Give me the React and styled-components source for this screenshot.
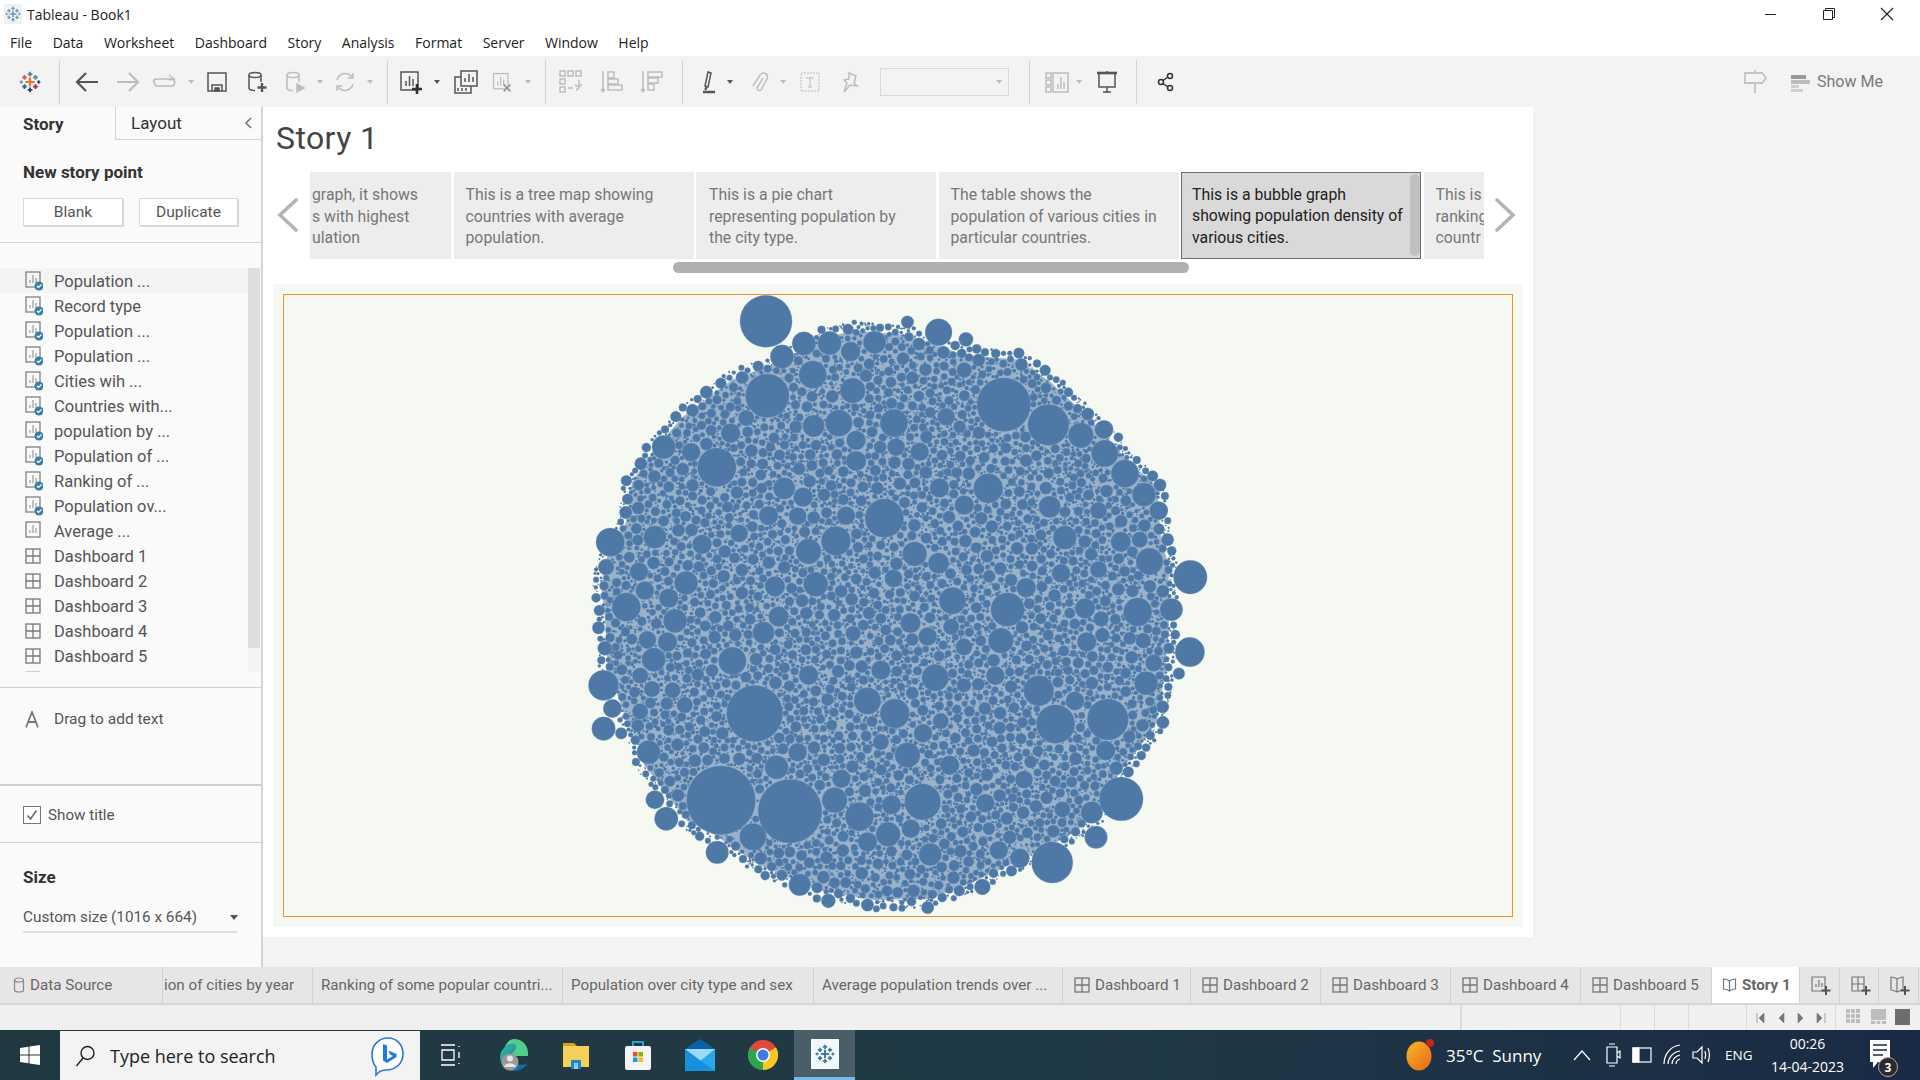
import React, { useMemo } from 'react'
import styled, { createGlobalStyle } from 'styled-components'

const GlobalStyle = createGlobalStyle`
  html, body { margin: 0; padding: 0; background: #fff; }
  body { font-family: "Roboto", "Liberation Sans", sans-serif; color: #444; }
  * { box-sizing: border-box; }
`

const Window = styled.div`
  width: 1920px;
  height: 1080px;
  display: flex;
  flex-direction: column;
  overflow: hidden;
`

const TitleBar = styled.div`
  height: 28px;
  display: flex;
  align-items: center;
  padding: 0 4px 0 4px;
  background: #fff;
  font-family: "Open Sans", sans-serif;
  font-size: 14px;
  color: #222;
`
const TitleText = styled.span`
  margin-left: 5px;
  flex: 1;
`
const WinButton = styled.div`
  width: 58px;
  height: 28px;
  display: flex;
  align-items: center;
  justify-content: center;
`

const MenuBar = styled.div`
  height: 28px;
  display: flex;
  align-items: center;
  gap: 20.5px;
  padding-left: 10px;
  background: #fff;
  font-family: "Open Sans", sans-serif;
  font-size: 14px;
  color: #222;
`

const Toolbar = styled.div`
  height: 51px;
  display: flex;
  align-items: center;
  background: #f3f3f3;
`
const Slot = styled.div`
  width: ${p => p.$w}px;
  height: 100%;
  flex: none;
  display: flex;
  align-items: center;
  justify-content: center;
`
const ToolSep = styled.div`
  width: 1px;
  height: 44px;
  flex: none;
  background: #d2d2d2;
`
const ToolSelect = styled.div`
  width: 129px;
  height: 28px;
  flex: none;
  margin: 0 20px 0 0;
  border: 1.5px solid #d9d9d9;
  display: flex;
  align-items: center;
  justify-content: flex-end;
  padding-right: 6px;
`
const ToolSpacer = styled.div`
  flex: 1;
`
const ShowMe = styled.div`
  display: flex;
  align-items: center;
  gap: 7px;
  width: 150px;
  padding-left: 20px;
  font-size: 16px;
  color: #7a7a7a;
`

const Caret = styled.span`
  width: 0;
  height: 0;
  border-left: 3.5px solid transparent;
  border-right: 3.5px solid transparent;
  border-top: 4px solid ${p => (p.$on ? '#555' : '#bdbdbd')};
`
const BigCaret = styled(Caret)`
  border-left-width: 4px;
  border-right-width: 4px;
  border-top-width: 5px;
`

const Main = styled.div`
  height: 860px;
  display: flex;
  background: #f3f3f3;
`

const Sidebar = styled.aside`
  width: 263px;
  flex: none;
  background: #fafafa;
  border-right: 2px solid #d4d4d4;
  display: flex;
  flex-direction: column;
`
const SideTabs = styled.div`
  height: 33px;
  display: flex;
  flex: none;
`
const SideTab = styled.div`
  width: ${p => (p.$active ? 116 : 145)}px;
  padding-left: ${p => (p.$active ? 23 : 15)}px;
  display: flex;
  align-items: center;
  justify-content: space-between;
  font-size: 17px;
  font-weight: ${p => (p.$active ? 700 : 400)};
  color: #333;
  border-right: ${p => (p.$active ? '1px solid #d4d4d4' : 'none')};
  border-bottom: ${p => (p.$active ? 'none' : '1px solid #d4d4d4')};
`
const SectionHead = styled.div`
  font-size: 17px;
  font-weight: 700;
  color: #333;
  padding-left: 23px;
`
const NewPointHead = styled(SectionHead)`
  height: 58px;
  padding-top: 22px;
`
const StoryButtons = styled.div`
  display: flex;
  gap: 16px;
  padding: 0 0 16px 23px;
  border-bottom: 1px solid #d4d4d4;
`
const StoryButton = styled.div`
  width: ${p => p.$w}px;
  height: 28px;
  background: #fff;
  border: 1px solid #d8d8d8;
  box-shadow: 1px 1px 0 #d8d8d8;
  display: flex;
  align-items: center;
  justify-content: center;
  font-size: 15.5px;
  color: #555;
`
const SheetArea = styled.div`
  margin: 25px 0 15px;
  height: 404px;
  flex: none;
  display: flex;
`
const SheetList = styled.div`
  width: 248px;
  display: flex;
  flex-direction: column;
  overflow: hidden;
`
const SheetRow = styled.div`
  height: 25px;
  flex: none;
  display: flex;
  align-items: center;
  gap: 13px;
  padding: 1px 0 0 25px;
  font-size: 16.5px;
  color: #555;
  background: ${p => (p.$hover ? '#f4f4f4' : 'transparent')};
`
const SheetStub = styled.div`
  width: 15px;
  height: 1px;
  margin: 3px 0 0 25px;
  background: #d0d0d0;
`
const SheetScroll = styled.div`
  width: 12px;
  background: #f3f3f3;
`
const ScrollThumb = styled.div`
  height: 380px;
  background: #dedede;
`
const Section = styled.div`
  flex: none;
  height: ${p => p.$h}px;
  border-top: ${p => p.$line || 1}px solid #d0d0d0;
`
const DragRow = styled.div`
  display: flex;
  align-items: center;
  gap: 15px;
  padding: 22px 0 0 25px;
  font-size: 15.5px;
  color: #555;
`
const CheckRow = styled.div`
  display: flex;
  align-items: center;
  gap: 7px;
  padding: 20px 0 0 23px;
  font-size: 15.2px;
  color: #555;
`
const CheckBox = styled.div`
  width: 18px;
  height: 18px;
  background: #fff;
  border: 1.5px solid #777;
  display: flex;
  align-items: center;
  justify-content: center;
`
const SizeHead = styled(SectionHead)`
  padding-top: 24px;
`
const SizeSelect = styled.div`
  width: 215px;
  height: 30px;
  margin: 16px 0 0 23px;
  display: flex;
  align-items: center;
  justify-content: space-between;
  font-size: 15.3px;
  color: #555;
  border-bottom: 2px solid #e0e0e0;
`

const Content = styled.div`
  flex: 1;
  display: flex;
  align-items: flex-start;
`
const StoryPanel = styled.div`
  width: 1270px;
  height: 830px;
  background: #fff;
  display: flex;
  flex-direction: column;
`
const StoryTitle = styled.h1`
  height: 65px;
  margin: 0;
  padding: 12px 0 0 13px;
  font-family: "Roboto", sans-serif;
  font-size: 32px;
  font-weight: 400;
  letter-spacing: .4px;
  color: #444;
`
const Navigator = styled.div`
  height: 87px;
  display: flex;
  flex: none;
`
const NavArrow = styled.div`
  width: ${p => p.$w}px;
  flex: none;
  display: flex;
  align-items: center;
  justify-content: center;
  padding: 0 0 2px 2px;
`
const Points = styled.div`
  display: flex;
  gap: 2.5px;
`
const Point = styled.div`
  position: relative;
  width: ${p => p.$w}px;
  height: 87px;
  flex: none;
  overflow: hidden;
  padding: ${p => (p.$selected ? 10.5 : 12)}px 0 0 ${p => p.$pad ?? 12}px;
  background: ${p => (p.$selected ? '#d9d9d9' : '#ededed')};
  border: ${p => (p.$selected ? '1.5px solid #6f6f6f' : 'none')};
  color: ${p => (p.$selected ? '#222' : '#777')};
  font-size: 15.8px;
  line-height: 21.5px;
  white-space: nowrap;
`
const PointThumb = styled.div`
  position: absolute;
  top: 1px;
  right: 0;
  width: 10px;
  height: 82px;
  background: #c0c0c0;
  border-radius: 5px;
`
const NavScroll = styled.div`
  width: 516px;
  height: 11px;
  flex: none;
  margin: 3px 0 0 410px;
  background: #b0b0b0;
  border-radius: 6px;
`
const Dash = styled.div`
  width: 1250px;
  height: 643px;
  flex: none;
  margin: 11px 0 0 10px;
  padding: 10px;
  background: #f5f9f1;
`
const DashFrame = styled.div`
  width: 1230px;
  height: 623px;
  border: 1px solid #f0932b;
`

const Tabs = styled.div`
  height: 38px;
  display: flex;
  background: #e6e6e6;
  border-bottom: 2px solid #d6d6d6;
  font-size: 15.2px;
  color: #666;
`
const Tab = styled.div`
  width: ${p => p.$w}px;
  flex: none;
  display: flex;
  align-items: center;
  gap: 5px;
  white-space: nowrap;
  overflow: hidden;
  padding-left: ${p => p.$pad}px;
  background: ${p => (p.$active ? '#fff' : 'transparent')};
  font-weight: ${p => (p.$active ? 700 : 400)};
  border-right: 1px solid #d2d2d2;
`
const StatusBar = styled.div`
  height: 25px;
  display: flex;
  background: #f0f0f0;
`
const StatusCell = styled.div`
  width: ${p => p.$w}px;
  flex: none;
  display: flex;
  align-items: center;
  justify-content: space-evenly;
  border-right: ${p => p.$line ?? 1}px solid #dcdcdc;
`
const Taskbar = styled.div`
  height: 50px;
  display: flex;
  align-items: center;
  background: linear-gradient(90deg, #203840 0%, #203a45 55%, #1a2a45 100%);
  color: #fff;
  font-family: "Open Sans", sans-serif;
`
const SearchBox = styled.div`
  width: 360px;
  height: 49px;
  margin-top: 1px;
  flex: none;
  display: flex;
  align-items: center;
  padding: 0 14px 0 14px;
  gap: 14px;
  background: #f3f3f3;
  color: #222;
  font-size: 18px;
`
const SearchText = styled.span`
  flex: 1;
`
const TaskSlot = styled.div`
  width: ${p => p.$w}px;
  height: 50px;
  flex: none;
  display: flex;
  align-items: center;
  justify-content: center;
  background: ${p => (p.$active ? '#4a5e68' : 'transparent')};
  border-bottom: ${p => (p.$active ? '3px solid #76b9ed' : 'none')};
`
const Weather = styled.span`
  width: 131px;
  flex: none;
  padding-left: 11px;
  font-size: 17px;
  white-space: pre;
`
const Lang = styled.span`
  width: 49px;
  flex: none;
  padding-left: 9px;
  font-size: 13.5px;
`
const Clock = styled.div`
  width: 85px;
  flex: none;
  text-align: center;
  font-size: 14px;
  line-height: 23px;
`
const Notify = styled.div`
  position: relative;
  width: 70px;
  height: 50px;
  flex: none;
  display: flex;
  align-items: center;
  justify-content: center;
  padding-right: 10px;
`
const Badge = styled.span`
  position: absolute;
  left: 28px;
  top: 27px;
  width: 20px;
  height: 20px;
  border-radius: 50%;
  background: #2b2b2b;
  border: 1px solid #aaa;
  display: flex;
  align-items: center;
  justify-content: center;
  font-size: 12px;
  font-weight: 700;
`

const Svg = ({ w = 24, h, children, c = '#555', sw = 1.5, fill = 'none', vb }) => (
  <svg width={w} height={h || w} viewBox={vb || `0 0 ${w} ${h || w}`} fill={fill} stroke={c} strokeWidth={sw}>
    {children}
  </svg>
)

const OFF = '#bdbdbd'

const TableauMark = ({ size = 24, mono }) => {
  const Plus = ({ x, y, r, c, sw = 2 }) => (
    <path d={`M${x - r} ${y}H${x + r}M${x} ${y - r}V${y + r}`} stroke={mono || c} strokeWidth={sw} />
  )
  return (
    <svg width={size} height={size} viewBox="0 0 24 24" fill="none">
      <Plus x={12} y={12} r={5} c="#e8762b" sw={2.4} />
      <Plus x={12} y={3.5} r={2.6} c="#5b879b" />
      <Plus x={12} y={20.5} r={2.6} c="#1f447b" />
      <Plus x={6} y={7} r={2.6} c="#e15759" />
      <Plus x={18} y={7} r={2.6} c="#59879b" />
      <Plus x={6} y={17} r={2.6} c="#1f6f8f" />
      <Plus x={18} y={17} r={2.6} c="#c72037" />
      <Plus x={2.5} y={12} r={1.8} c="#7199a6" sw={1.6} />
      <Plus x={21.5} y={12} r={1.8} c="#1f447b" sw={1.6} />
    </svg>
  )
}

const BarsSquare = ({ c }) => (
  <>
    <rect x="3" y="3" width="17" height="18" stroke={c} strokeWidth="1.5" />
    <path d="M8 17v-5M11.5 17V7M15 17v-7" stroke={c} strokeWidth="1.5" />
  </>
)

const toolItems = [
  { w: 59, i: <TableauMark size={22} /> },
  { sep: 1 },
  { w: 54, i: <Svg w={26}><path d="M24 13H3M12 4l-9 9 9 9" stroke="#555" strokeWidth="2.2" /></Svg> },
  { w: 28, i: <Svg w={26}><path d="M2 13h21M14 4l9 9-9 9" stroke={OFF} strokeWidth="2.2" /></Svg> },
  { w: 46, i: <Svg w={26} c={OFF}><path d="M3 13h-.5a3 3 0 0 0 3 4h14a3 3 0 0 0 3-4 3 3 0 0 0-3-3h-15a3 3 0 0 0-3 3M17 6l5 4-5 1" /></Svg> },
  { w: 6, i: <Caret /> },
  { w: 46, i: <Svg w={22} c="#555"><path d="M2 2h18v18H2zM6 20v-6h10v6" /><path d="M9 17h4v3H9z" fill="#555" /></Svg> },
  { w: 34, i: <Svg w={24} c="#555"><ellipse cx="10" cy="5" rx="6" ry="2.5" /><path d="M4 5v13c0 1.5 3 2.5 6 2.5M16 5v7" /><path d="M17 13v9M12.5 17.5h9" strokeWidth="2.4" /></Svg> },
  { w: 42, i: <Svg w={24} c={OFF}><ellipse cx="10" cy="5" rx="6" ry="2.5" /><path d="M4 5v13c0 1.5 3 2.5 6 2.5M16 5v7" /><path d="M14 14l7 4-7 4z" fill={OFF} /></Svg> },
  { w: 8, i: <Caret /> },
  { w: 42, i: <Svg w={24} c={OFF}><path d="M4 10a8.5 8.5 0 0 1 15-3M20 14a8.5 8.5 0 0 1-15 3" /><path d="M20 3v5h-5M4 21v-5h5" /></Svg> },
  { w: 8, i: <Caret /> },
  { w: 13 },
  { sep: 1 },
  { w: 46, i: <Svg w={26}><BarsSquare c="#555" /><path d="M19 15v10M14 20h10" stroke="#333" strokeWidth="2.6" /></Svg> },
  { w: 6, i: <Caret $on /> },
  { w: 51, i: <Svg w={26} c="#555"><rect x="8" y="2" width="16" height="15" /><path d="M12 13v-4M16 13V5M20 13V8" /><path d="M8 8H2v16h16v-7M5 22v-3M9 22v-3M13 22v-3" /></Svg> },
  { w: 22, i: <Svg w={26}><BarsSquare c={OFF} /><path d="M15 16l8 8M23 16l-8 8" stroke="#9a9a9a" strokeWidth="2.2" /></Svg> },
  { w: 30, i: <Caret /> },
  { w: 2 },
  { sep: 1 },
  { w: 50, i: <Svg w={26} c={OFF}><path d="M2 2h5v5H2zM10 2h5v5h-5zM18 2h5v5h-5zM2 10h5v5H2zM2 18h5v5H2zM10 19h5M21 11v6a4 4 0 0 1-3 4M17 16l4 2 3-3" /></Svg> },
  { w: 32, i: <Svg w={24} c={OFF}><path d="M3 1v21M1 19l2 3 2-3M8 2h6v6H8zM8 9h10v5H8zM8 15h14v5H8z" /></Svg> },
  { w: 48, i: <Svg w={24} c={OFF}><path d="M3 1v21M1 19l2 3 2-3M8 2h14v5H8zM8 8h10v5H8zM8 14h6v6H8z" /></Svg> },
  { w: 6 },
  { sep: 1 },
  { w: 10 },
  { w: 34, i: <Svg w={24} c="#555"><path d="M10 2l3 1-3 14-3-1zM8 17l-1 3 2-2" /><path d="M5 22h12" strokeWidth="2.5" /></Svg> },
  { w: 6, i: <Caret $on /> },
  { w: 5 },
  { w: 42, i: <Svg w={20} c={OFF}><path d="M14 6l-6 10a2.5 2.5 0 0 0 4 2l6-11a4 4 0 0 0-7-4L4 14" /></Svg> },
  { w: 6, i: <Caret /> },
  { w: 48, i: <Svg w={22} c={OFF} sw={1}><rect x="2" y="2" width="18" height="18" strokeDasharray="2 1" /><path d="M7 7h8M11 7v9M9 16h4" /></Svg> },
  { w: 32, i: <Svg w={22} c={OFF}><path d="M10 2l7 3-2 7 3 3-7-1-6 7 3-9-3-3 5-1z" /></Svg> },
  { w: 14 },
  { select: 1 },
  { sep: 1 },
  { w: 8 },
  { w: 38, i: <Svg w={26} c={OFF}><path d="M2 4h5v5H2zM2 11h5v5H2zM2 18h5v5H2zM9 4h15v19H9zM14 20v-5M17 20V8M20 20v-7" /></Svg> },
  { w: 6, i: <Caret /> },
  { w: 50, i: <Svg w={24} c="#555"><path d="M2 3h20" strokeWidth="2.6" /><path d="M4 3v14h16V3M12 1v2M12 17v6M8 22h8" /></Svg> },
  { w: 4 },
  { sep: 1 },
  { w: 58, i: <Svg w={20} c="#333"><circle cx="14" cy="4" r="2.5" /><circle cx="5" cy="10" r="2.5" /><circle cx="14" cy="16" r="2.5" /><path d="M12 5l-5 3.5M7 11.5l5 3.5" /></Svg> }
]

const Toolbars = () => (
  <Toolbar>
    {toolItems.map((t, n) => {
      if (t.sep) return <ToolSep key={n} />
      if (t.select) return <ToolSelect key={n}><Caret /></ToolSelect>
      return <Slot key={n} $w={t.w}>{t.i}</Slot>
    })}
    <ToolSpacer />
    <Slot $w={30}>
      <Svg w={26} c="#c4c4c4"><path d="M13 1v3M3 4h17l4 5-4 5H3zM13 14v10" strokeWidth="1.8" /></Svg>
    </Slot>
    <ShowMe>
      <Svg w={20} c="none" sw={0}>
        <path d="M1 3h15v4H1z" fill="#9a9a9a" />
        <path d="M1 8h19v4H1z" fill="#bcbcbc" />
        <path d="M1 13h8v3H1zM1 17h12v3H1z" fill="#cfcfcf" />
      </Svg>
      Show Me
    </ShowMe>
  </Toolbar>
)

const SheetGlyph = styled.svg`
  flex: none;
  margin-right: -2px;
`
const SheetIcon = ({ done }) => (
  <SheetGlyph width="18" height="20" viewBox="0 0 18 20" fill="none">
    <rect x="1" y="1" width="14" height="15" stroke="#777" strokeWidth="1.2" />
    <path d="M5 12V9M8 12V4M11 12V7" stroke="#888" />
    {done && <circle cx="14" cy="15" r="4.5" fill="#3b7ea1" />}
    {done && <path d="M12 15l1.5 1.5 3-3" stroke="#fff" strokeWidth="1.2" />}
  </SheetGlyph>
)
const DashGlyph = styled.svg`
  flex: none;
`
const DashIcon = ({ c = '#777' }) => (
  <DashGlyph width="16" height="16" viewBox="0 0 16 16" fill="none" stroke={c} strokeWidth="1.3">
    <rect x="1" y="1" width="14" height="14" />
    <path d="M8 1v14M1 8h14" />
  </DashGlyph>
)

const sheets = [
  ['Population ...', 1], ['Record type', 1], ['Population ...', 1], ['Population ...', 1], ['Cities wih ...', 1],
  ['Countries with...', 1], ['population by ...', 1], ['Population of ...', 1], ['Ranking of ...', 1],
  ['Population ov...', 1], ['Average ...', 0],
  ['Dashboard 1'], ['Dashboard 2'], ['Dashboard 3'], ['Dashboard 4'], ['Dashboard 5']
]

const SidePanel = () => (
  <Sidebar>
    <SideTabs>
      <SideTab $active>Story</SideTab>
      <SideTab>
        Layout
        <svg width="30" height="20" viewBox="0 0 30 20" fill="none" stroke="#777" strokeWidth="1.6">
          <path d="M20 5l-5 5 5 5" />
        </svg>
      </SideTab>
    </SideTabs>
    <NewPointHead>New story point</NewPointHead>
    <StoryButtons>
      <StoryButton $w={100}>Blank</StoryButton>
      <StoryButton $w={99}>Duplicate</StoryButton>
    </StoryButtons>
    <SheetArea>
      <SheetList>
        {sheets.map(([name, done], i) => (
          <SheetRow key={i} $hover={i === 0}>
            {done === undefined ? <DashIcon /> : <SheetIcon done={done} />}
            {name}
          </SheetRow>
        ))}
        <SheetStub />
      </SheetList>
      <SheetScroll><ScrollThumb /></SheetScroll>
    </SheetArea>
    <Section $h={97}>
      <DragRow>
        <svg width="14" height="17" viewBox="0 0 14 17" fill="none" stroke="#777" strokeWidth="1.8"><path d="M1 16.5L7 1l6 15.5M3 11h8" /></svg>
        Drag to add text
      </DragRow>
    </Section>
    <Section $h={58} $line={2}>
      <CheckRow>
        <CheckBox>
          <svg width="12" height="12" viewBox="0 0 12 12" fill="none" stroke="#666" strokeWidth="1.5"><path d="M1.5 6.5L4.5 10l6-8.5" /></svg>
        </CheckBox>
        Show title
      </CheckRow>
    </Section>
    <Section $h={120}>
      <SizeHead>Size</SizeHead>
      <SizeSelect>
        Custom size (1016 x 664)
        <BigCaret $on />
      </SizeSelect>
    </Section>
  </Sidebar>
)

const BIG = `442,98,62 532,151,28 593,150,28 700,148,27 852,124,32 643,170,23 480,182,28 553,225,33 445,275,52 648,263,30
1007,296,64 1113,344,49 917,141,17 778,100,15 1190,369,30 1245,355,22 1247,412,32 1295,460,33 1340,510,28 1375,548,22
1378,487,15 746,340,33 615,340,32 555,347,26 395,328,19 358,364,23 325,445,46 199,397,28 264,409,22 656,381,23
656,430,24 751,397,21 807,408,22 870,325,21 913,214,18 970,495,35 1116,539,26 1232,548,20 854,494,23 913,535,23
723,566,46 632,560,22 485,495,26 530,516,23 448,560,23 517,561,21 608,620,35 543,645,30 795,651,29 852,673,25
378,602,21 290,628,23 178,611,27 72,623,34 62,682,19 252,720,28 140,693,22 154,738,22 110,777,34 211,756,23
226,810,28 463,728,24 560,723,29 745,709,21 885,762,32 1016,783,40 1060,731,23 1000,857,30 1152,612,28 1285,622,24
1330,617,19 1353,669,32 1232,688,20 1143,697,22 1450,706,40 1200,780,24 1325,789,34 1405,783,27 1449,884,35 1238,805,18
1204,860,23 1241,844,17 1338,857,18 1363,910,20 1345,958,28 1090,976,36 1130,1055,46 1254,1044,49 1176,1000,22 1423,935,14
1385,1051,15 472,800,24 436,838,26 362,905,33 175,902,28 208,860,23 160,855,21 59,875,17 143,940,19 171,972,19
220,975,19 56,963,36 77,1018,22 56,1066,28 98,1077,14 143,1025,19 249,1010,19 163,1122,28 415,1030,67 683,1000,32
748,1030,35 844,945,32 715,927,23 543,939,23 649,840,18 785,815,24 826,847,22 882,824,19 912,872,20 987,940,22
912,963,17 335,1236,82 499,1262,76 605,1236,30 664,1275,34 814,1240,43 740,1247,23 732,1317,29 786,1304,22 683,1335,23
832,1365,27 411,1323,32 326,1360,27 178,1235,22 205,1280,28 467,1158,28 517,1122,22 778,1129,30 715,1098,19 878,1153,23
621,1185,22 857,1048,19 815,1077,22 963,1243,22 1055,1187,21 1216,1265,26 1286,1233,52 1226,1324,27 1122,1384,49 1045,1374,23
995,1355,22 956,1442,19 826,1491,15 683,1485,15 590,1475,17 522,1437,26 1249,1118,23 1274,1160,16 1345,1111,10 1146,1258,19
1021,1324,16 904,1357,15`.trim().split(/\s+/).map(s => s.split(',').map(Number))

const OUTLINE = [[560,120],[650,100],[780,110],[920,160],[1050,170],[1130,225],[1210,300],[1260,350],[1320,420],[1390,480],[1400,600],[1420,680],[1420,760],[1420,830],[1410,940],[1390,1060],[1340,1130],[1300,1180],[1240,1290],[1170,1340],[1050,1400],[940,1450],[840,1490],[700,1495],[560,1470],[420,1410],[300,1330],[240,1300],[140,1170],[120,1110],[90,1050],[45,920],[40,820],[30,720],[45,650],[90,570],[105,470],[160,390],[230,310],[350,220],[430,190],[480,170]]

const inside = (x, y) => {
  let hit = false
  for (let i = 0, j = OUTLINE.length - 1; i < OUTLINE.length; j = i++) {
    const [xi, yi] = OUTLINE[i]
    const [xj, yj] = OUTLINE[j]
    if (yi > y !== yj > y && x < ((xj - xi) * (y - yi)) / (yj - yi) + xi) hit = !hit
  }
  return hit
}

// seeded so every render packs the same little bubbles
const packBubbles = () => {
  let seed = 20230414
  const rnd = () => {
    seed = (seed + 0x6d2b79f5) | 0
    let t = Math.imul(seed ^ (seed >>> 15), 1 | seed)
    t = (t + Math.imul(t ^ (t >>> 7), 61 | t)) ^ t
    return ((t ^ (t >>> 14)) >>> 0) / 4294967296
  }
  const out = BIG.slice()
  const cell = 32
  const overlap = 0.9
  const grid = new Map()
  const passes = [[15, 400], [13, 900], [11, 2200], [9.5, 4000], [8, 6000], [7, 7000], [6, 8000], [5, 9000], [4, 10000], [3.2, 10000], [2.5, 10000], [1.9, 10000]]
  passes.forEach(([r, tries]) => {
    for (let n = 0; n < tries; n++) {
      const x = 20 + rnd() * 1420
      const y = 90 + rnd() * 1420
      if (!inside(x, y)) continue
      let free = true
      for (const b of BIG) {
        const d = r + b[2] - overlap
        if ((x - b[0]) ** 2 + (y - b[1]) ** 2 < d * d) { free = false; break }
      }
      if (!free) continue
      const gx = Math.floor(x / cell)
      const gy = Math.floor(y / cell)
      for (let a = gx - 1; a <= gx + 1 && free; a++) {
        for (let c = gy - 1; c <= gy + 1 && free; c++) {
          for (const b of grid.get(a * 10000 + c) || []) {
            const d = r + b[2] - overlap
            if ((x - b[0]) ** 2 + (y - b[1]) ** 2 < d * d) { free = false; break }
          }
        }
      }
      if (!free) continue
      const p = [x, y, r]
      out.push(p)
      const key = gx * 10000 + gy
      if (!grid.has(key)) grid.set(key, [])
      grid.get(key).push(p)
    }
  })
  return out
}

const BubbleChart = () => {
  const bubbles = useMemo(packBubbles, [])
  const k = 1 / 2.376
  return (
    <svg width="1228" height="621" viewBox="0 0 1228 621">
      <g transform={`translate(${580 - 284} ${280 - 295}) scale(${k})`}>
        <polygon
          points={OUTLINE.map(([x, y]) => `${725 + (x - 725) * 0.97},${795 + (y - 795) * 0.97}`).join(' ')}
          fill="#4e79a7"
          opacity="0.55"
        />
        <g fill="#4e79a7">
          {bubbles.map((b, i) => (
            <circle key={i} cx={b[0]} cy={b[1]} r={b[2]} stroke={b[2] >= 6 ? '#84a1c1' : 'none'} strokeWidth="0.7" />
          ))}
        </g>
      </g>
    </svg>
  )
}

const StoryArea = () => (
  <Content>
    <StoryPanel>
      <StoryTitle>Story 1</StoryTitle>
      <Navigator>
        <NavArrow $w={47}>
          <svg width="22" height="34" viewBox="0 0 22 34" fill="none" stroke="#b4b4b4" strokeWidth="3.6" strokeLinecap="round"><path d="M19 2L3 17l16 15" /></svg>
        </NavArrow>
        <Points>
          <Point $w={141} $pad={2}>graph, it shows<br />s with highest<br />ulation</Point>
          <Point $w={240} $pad={12}>This is a tree map showing<br />countries with average<br />population.</Point>
          <Point $w={240} $pad={13}>This is a pie chart<br />representing population by<br />the city type.</Point>
          <Point $w={240} $pad={12}>The table shows the<br />population of various cities in<br />particular countries.</Point>
          <Point $w={240} $pad={10} $selected>
            This is a bubble graph<br />showing population density of<br />various cities.
            <PointThumb />
          </Point>
          <Point $w={60} $pad={12}>This is<br />ranking<br />countr</Point>
        </Points>
        <NavArrow $w={40}>
          <svg width="22" height="34" viewBox="0 0 22 34" fill="none" stroke="#b4b4b4" strokeWidth="3.6" strokeLinecap="round"><path d="M3 2l16 15L3 32" /></svg>
        </NavArrow>
      </Navigator>
      <NavScroll />
      <Dash>
        <DashFrame><BubbleChart /></DashFrame>
      </Dash>
    </StoryPanel>
  </Content>
)

const BottomTabs = () => (
  <Tabs>
    <Tab $w={163} $pad={13}>
      <DashGlyph width="12" height="16" viewBox="0 0 12 16" fill="none" stroke="#888" strokeWidth="1.2">
        <ellipse cx="6" cy="3" rx="4.5" ry="2" /><path d="M1.5 3v10c0 1 2 2 4.500 2s4.500-1 4.500-2V3" />
      </DashGlyph>
      Data Source
    </Tab>
    <Tab $w={150} $pad={1}>ion of cities by year</Tab>
    <Tab $w={250} $pad={8}>Ranking of some popular countri...</Tab>
    <Tab $w={251} $pad={8}>Population over city type and sex</Tab>
    <Tab $w={249} $pad={8}>Average population trends over ...</Tab>
    {[128, 130, 130, 130, 131].map((w, i) => (
      <Tab key={i} $w={w} $pad={11}><DashIcon />Dashboard {i + 1}</Tab>
    ))}
    <Tab $w={88} $pad={10} $active>
      <DashGlyph width="15" height="16" viewBox="0 0 15 16" fill="none" stroke="#777" strokeWidth="1.2">
        <path d="M1.500 2c2 0 4 .5 6 2 2-1.500 4-2 6-2v10c-2 0-4 .5-6 2-2-1.500-4-2-6-2zM7.500 4v10" />
      </DashGlyph>
      Story 1
    </Tab>
    {['sheet', 'dash', 'story'].map((kind, i) => (
      <Tab key={kind} $w={[40, 39, 40][i]} $pad={10}>
        <svg width="22" height="24" viewBox="0 0 22 24" fill="none" stroke="#777" strokeWidth="1.2">
          {kind === 'dash' && <path d="M2 4h12v14H2zM8 4v14M2 11h12" />}
          {kind === 'sheet' && <path d="M2 4h13v14H2zM6 14v-3M9 14V7M12 14v-4" />}
          {kind === 'story' && <path d="M2 4c2 0 4 .5 6 2 1-.5 3-1.500 6-2v13c-2 0-4 1-6 2-2-1-4-2-6-2zM8 6v13" />}
          <path d="M16 13v9M11.500 17.500h9" stroke="#555" strokeWidth="2" />
        </svg>
      </Tab>
    ))}
  </Tabs>
)

const Status = () => (
  <StatusBar>
    <StatusCell $w={1462} $line={2} />
    <StatusCell $w={159} />
    <StatusCell $w={34} />
    <StatusCell $w={34} />
    <StatusCell $w={58} />
    <StatusCell $w={89}>
      {['M2 2v10M9 2L4 7l5 5z', 'M9 2L4 7l5 5z', 'M3 2l5 5-5 5z', 'M10 2v10M2 2l5 5-5 5z'].map(d => (
        <svg key={d} width="12" height="14" viewBox="0 0 12 14" fill="#777" stroke="#777" strokeWidth=".6"><path d={d} /></svg>
      ))}
    </StatusCell>
    <StatusCell $w={84} $line={0}>
      <svg width="15" height="17" viewBox="0 0 15 17" fill="#bdbdbd"><path d="M0 0h4v4H0zM5 0h4v4H5zM10 0h4v4h-4zM0 5h4v4H0zM5 5h4v4H5zM10 5h4v4h-4zM0 10h4v4H0zM5 10h4v4H5zM10 10h4v4h-4z" /></svg>
      <svg width="15" height="17" viewBox="0 0 15 17" fill="#bdbdbd"><path d="M0 0h15v11H0zM0 12h4v3H0zM5.500 12h4v3h-4zM11 12h4v3h-4z" /></svg>
      <svg width="15" height="17" viewBox="0 0 15 17" fill="#6d6d6d"><path d="M0 0h15v16H0z" /></svg>
    </StatusCell>
  </StatusBar>
)

const TaskIcons = {
  edge: (
    <svg width="30" height="34" viewBox="0 0 30 34">
      <defs>
        <linearGradient id="edgeA" x1="0" y1="0" x2="1" y2="1"><stop offset="0" stopColor="#35c1a0" /><stop offset="1" stopColor="#0c59a4" /></linearGradient>
      </defs>
      <path d="M15 1c8 0 14 6 14 14v3H12c0-4 5-6 5-9C17 5 9 5 5 10 8 4 11 1 15 1z" fill="#4fd08a" />
      <path d="M5 10c4-5 12-5 12-1 0 3-5 5-5 9 0 6 8 12 17 7-3 5-8 8-14 8C7 33 1 27 1 19c0-3 1-6 4-9z" fill="url(#edgeA)" />
      <circle cx="11" cy="24" r="8.500" fill="#9a9a9a" />
      <circle cx="11" cy="20.500" r="3" fill="#e6e6e6" />
      <path d="M5 29c1-5 11-5 12 0z" fill="#e6e6e6" />
    </svg>
  ),
  folder: (
    <svg width="28" height="28" viewBox="0 0 28 28">
      <path d="M1 2h11l3 3H1z" fill="#d89e1c" />
      <path d="M1 5h26v21H1z" fill="#f4cf5a" />
      <path d="M9 19h10v9H9z" fill="#1a88d8" />
      <path d="M12 22h4v6h-4z" fill="#8ed0f5" />
    </svg>
  ),
  store: (
    <svg width="28" height="32" viewBox="0 0 28 32">
      <path d="M9 7V3h10v4" fill="none" stroke="#2a9fd8" strokeWidth="2" />
      <rect x="1" y="7" width="26" height="24" rx="2" fill="#f4f4f4" />
      <path d="M9 13h4.500v4.500H9z" fill="#f25022" />
      <path d="M14.500 13H19v4.500h-4.500z" fill="#7fba00" />
      <path d="M9 18.500h4.500V23H9z" fill="#00a4ef" />
      <path d="M14.500 18.500H19V23h-4.500z" fill="#ffb900" />
    </svg>
  ),
  mail: (
    <svg width="30" height="32" viewBox="0 0 30 32">
      <path d="M0 10L15 0l15 10z" fill="#0a5fa8" />
      <path d="M0 10h30v22H0z" fill="#29a8ea" />
      <path d="M0 10l15 12 15-12z" fill="#9adcf7" />
      <path d="M0 10v22h30L12 19z" fill="#1591dd" />
    </svg>
  ),
  chrome: (
    <svg width="30" height="30" viewBox="0 0 30 30">
      <circle cx="15" cy="15" r="15" fill="#e04a3a" />
      <path d="M15 15L28 7.500A15 15 0 0 1 15 30z" fill="#f9c824" />
      <path d="M15 15L15 30A15 15 0 0 1 2 7.500z" fill="#2fa44f" />
      <circle cx="15" cy="15" r="7" fill="#fff" />
      <circle cx="15" cy="15" r="5.500" fill="#3b7de0" />
    </svg>
  )
}

const TaskBar = () => (
  <Taskbar>
    <TaskSlot $w={60}>
      <svg width="20" height="20" viewBox="0 0 20 20" fill="#fff"><path d="M0 3l8.500-1.300v7.800H0zM9.500 1.500L20 0v9.500H9.500zM0 10.500h8.500v7.800L0 17zM9.500 10.500H20V20L9.500 18.500z" /></svg>
    </TaskSlot>
    <SearchBox>
      <svg width="22" height="24" viewBox="0 0 22 24" fill="none" stroke="#222" strokeWidth="1.4"><circle cx="13.500" cy="9" r="6.500" /><path d="M9 14l-6.500 8" /></svg>
      <SearchText>Type here to search</SearchText>
      <svg width="36" height="42" viewBox="0 0 36 42" fill="none">
        <path d="M18 3c9 0 15 7 15 16 0 10-8 16-17 16-3 0-4 0-7 2l-3 3v-8C3 29 2 24 2 19 2 10 9 3 18 3z" stroke="#2b78d8" strokeWidth="1.6" fill="#fff" />
        <path d="M13 9l4 1.500v14l6-3.500-3-1.500-1.500-4 8 3.500v3l-9.500 6-4-2.500z" fill="#1f7ae0" />
      </svg>
    </SearchBox>
    <TaskSlot $w={62}>
      <svg width="22" height="22" viewBox="0 0 22 22" fill="none" stroke="#fff" strokeWidth="1.3"><path d="M1 1h14M1 21h14M2 6h12v10H2zM19 2v1M19 8v6M19 19v1" /></svg>
    </TaskSlot>
    <TaskSlot $w={63}>{TaskIcons.edge}</TaskSlot>
    <TaskSlot $w={62}>{TaskIcons.folder}</TaskSlot>
    <TaskSlot $w={62}>{TaskIcons.store}</TaskSlot>
    <TaskSlot $w={62}>{TaskIcons.mail}</TaskSlot>
    <TaskSlot $w={63}>{TaskIcons.chrome}</TaskSlot>
    <TaskSlot $w={61} $active>
      <svg width="28" height="30" viewBox="0 0 28 30">
        <rect width="28" height="30" fill="#f3f7fa" />
        <g transform="translate(4 5)"><TableauMark size={20} mono="#3f7d9e" /></g>
      </svg>
    </TaskSlot>
    <ToolSpacer />
    <TaskSlot $w={30}>
      <svg width="28" height="34" viewBox="0 0 28 34">
        <defs>
          <linearGradient id="sunA" x1="0" y1="0" x2="1" y2="1"><stop offset="0" stopColor="#f8b924" /><stop offset="1" stopColor="#e8641a" /></linearGradient>
        </defs>
        <ellipse cx="13" cy="18" rx="12.500" ry="14.500" fill="url(#sunA)" />
        <circle cx="24" cy="5" r="4" fill="#c4261c" />
      </svg>
    </TaskSlot>
    <Weather>35°C  Sunny</Weather>
    <TaskSlot $w={31}>
      <svg width="18" height="12" viewBox="0 0 18 12" fill="none" stroke="#fff" strokeWidth="1.2"><path d="M1 11l8-9 8 9" /></svg>
    </TaskSlot>
    <TaskSlot $w={31}>
      <svg width="16" height="24" viewBox="0 0 16 24" fill="none" stroke="#fff" strokeWidth="1.2"><path d="M4 1h6M4 23h6M2 4h10v16H2zM12 10l3-2v7l-3-2" /></svg>
    </TaskSlot>
    <TaskSlot $w={28}>
      <svg width="20" height="16" viewBox="0 0 20 16" fill="none" stroke="#fff" strokeWidth="1.2"><rect x="1" y="1" width="18" height="14" /><rect x="1" y="1" width="6" height="14" fill="#fff" /></svg>
    </TaskSlot>
    <TaskSlot $w={31}>
      <svg width="20" height="22" viewBox="0 0 20 22" fill="none" stroke="#fff" strokeWidth="1.2"><path d="M2 20C2 10 9 2 18 1M6 20c0-6 5-12 12-13M10 20c0-4 3-8 8-9M14 20c0-2 1-4 4-5" /></svg>
    </TaskSlot>
    <TaskSlot $w={29}>
      <svg width="22" height="24" viewBox="0 0 22 24" fill="none" stroke="#fff" strokeWidth="1.2"><path d="M2 9h4l5-5v16l-5-5H2zM14 8c1 3 1 5 0 8M17 5c2 5 2 9 0 14" /></svg>
    </TaskSlot>
    <Lang>ENG</Lang>
    <Clock>00:26<br />14-04-2023</Clock>
    <Notify>
      <svg width="20" height="30" viewBox="0 0 20 30" fill="#fff"><path d="M0 0h20v22H8l-5 6v-6H0z" /><path d="M3 5h14M3 10h14M3 15h10" stroke="#1a2a45" strokeWidth="1.4" /></svg>
      <Badge>3</Badge>
    </Notify>
  </Taskbar>
)

const App = () => (
  <Window>
    <GlobalStyle />
    <TitleBar>
      <svg width="18" height="20" viewBox="0 0 18 20"><rect width="18" height="20" fill="#eef1f4" /><g transform="translate(1 2)"><TableauMark size={16} mono="#6d9ab5" /></g></svg>
      <TitleText>Tableau - Book1</TitleText>
      <WinButton><svg width="12" height="12" viewBox="0 0 12 12" stroke="#222"><path d="M0 6.500h11" /></svg></WinButton>
      <WinButton><svg width="12" height="12" viewBox="0 0 12 12" fill="none" stroke="#222"><path d="M.5 2.500h9v9h-9zM2.500 2.500V.5h9v9h-2" /></svg></WinButton>
      <WinButton><svg width="14" height="14" viewBox="0 0 14 14" stroke="#222" strokeWidth="1.1"><path d="M1 1l12 12M13 1L1 13" /></svg></WinButton>
    </TitleBar>
    <MenuBar>
      {['File', 'Data', 'Worksheet', 'Dashboard', 'Story', 'Analysis', 'Format', 'Server', 'Window', 'Help'].map(m => <span key={m}>{m}</span>)}
    </MenuBar>
    <Toolbars />
    <Main>
      <SidePanel />
      <StoryArea />
    </Main>
    <BottomTabs />
    <Status />
    <TaskBar />
  </Window>
)

export default App
